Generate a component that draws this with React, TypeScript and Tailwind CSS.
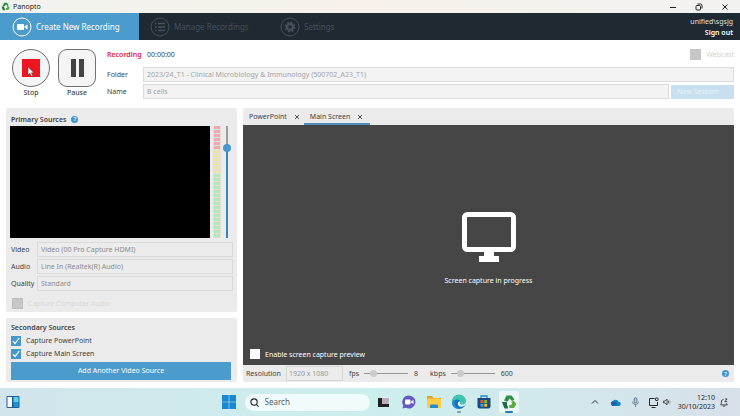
import { useState } from "react";
import type { ReactNode } from "react";

function LogoShape() {
  return (
    <>
      <path d="M3 6.500 5.500 1.500h5L13.500 5.500 11 7 8.500 4.500 6.500 8Z" fill="#2f9148" />
      <path d="M12.500 6.500 15.500 10l-2.500 4H8.500l-.5-3.500h3l-.5-2.500Z" fill="#5bad3c" />
      <path d="M1 8h4.500l1 3 .5 3.500H3.500Z" fill="#14703c" />
      <path d="m6.500 7 4.500 2.700-4.500 2.500Z" fill="white" />
    </>
  );
}

function HelpIcon() {
  return (
    <button type="button" aria-label="Help" className="flex size-[7px] items-center justify-center rounded-full bg-[#3f96cd] text-[6px] leading-none font-bold text-[#dcedf7]">
      ?
    </button>
  );
}

function NavTab({ label, active, className, children }: { label: string; active?: boolean; className: string; children: ReactNode }) {
  return (
    <button type="button" disabled={!active} className={`flex h-full items-center gap-1 text-[8px] ${active ? "bg-[#4b9bcd] text-white" : "text-[#46505a]"} ${className}`}>
      <svg viewBox="0 0 20 20" className="size-5" fill="none" stroke="currentColor" aria-hidden="true">
        <circle cx="10" cy="10" r="9" strokeWidth="1" />
        {children}
      </svg>
      {label}
    </button>
  );
}

const fieldStyle = "h-[15px] min-w-0 flex-1 appearance-none border border-[#dadada] px-[3px] text-[7px] leading-[13px] opacity-100";

function SourceRow({ id, label, value }: { id: string; label: string; value: string }) {
  return (
    <div className="flex items-center">
      <label htmlFor={id} className="w-[26px] text-[7px] leading-[15px]">{label}</label>
      <select id={id} disabled className={`${fieldStyle} bg-[#ececec] text-[#8b8b8b]`}>
        <option>{value}</option>
      </select>
    </div>
  );
}

function CheckRow({ label }: { label: string }) {
  const [checked, setChecked] = useState(true);
  return (
    <label className="flex h-[13px] items-center gap-[5px] text-[7px] leading-[13px]">
      <span className="grid size-[10px] place-items-center">
        <input type="checkbox" checked={checked} onChange={() => setChecked(!checked)} className="peer col-start-1 row-start-1 size-[10px] appearance-none bg-white checked:bg-[#4598cd]" />
        <svg viewBox="0 0 10 10" className="pointer-events-none col-start-1 row-start-1 hidden size-[10px] peer-checked:block" fill="none" stroke="white" strokeWidth="1.2" aria-hidden="true">
          <path d="m2 5.200 2 2.300L8.300 2" />
        </svg>
      </span>
      {label}
    </label>
  );
}

function RateSlider({ id, label, value, max, shown }: { id: string; label: string; value: number; max: number; shown: string }) {
  return (
    <div className="flex items-center">
      <label htmlFor={id} className="mr-[5px]">{label}</label>
      <input
        id={id}
        type="range"
        min={0}
        max={max}
        defaultValue={value}
        className="h-[7px] w-11 appearance-none bg-transparent bg-[linear-gradient(#969696,#969696)] bg-[length:100%_1px] bg-center bg-no-repeat [&::-webkit-slider-thumb]:size-[7px] [&::-webkit-slider-thumb]:appearance-none [&::-webkit-slider-thumb]:rounded-full [&::-webkit-slider-thumb]:bg-[#cbcbcb]"
      />
      <output htmlFor={id} className="ml-[6px]">{shown}</output>
    </div>
  );
}

function TitleBar() {
  return (
    <header className="flex h-[13px] items-center bg-linear-to-r from-[#f1f3ee] via-[#f7f1ea] to-[#f2f2f1] pl-px">
      <svg viewBox="0 0 16 16" className="size-[9px]" aria-hidden="true">
        <LogoShape />
      </svg>
      <h1 className="ml-[3px] flex-1 text-[7px] leading-[13px] text-[#222]">Panopto</h1>
      <div className="flex items-center gap-4 pr-[10px] text-[#222]">
        <button type="button" aria-label="Minimise">
          <svg viewBox="0 0 10 10" className="size-[10px]" stroke="currentColor" strokeWidth="1"><path d="M2 5.500h6" /></svg>
        </button>
        <button type="button" aria-label="Restore">
          <svg viewBox="0 0 10 10" className="size-[10px]" fill="none" stroke="currentColor" strokeWidth="1">
            <rect x="2" y="3.500" width="4.500" height="4.500" rx="1" />
            <path d="M3.500 2h3a1.500 1.500 0 0 1 1.500 1.500v3" />
          </svg>
        </button>
        <button type="button" aria-label="Close">
          <svg viewBox="0 0 10 10" className="size-[10px]" stroke="currentColor" strokeWidth="1"><path d="m2.500 2.500 5 5m0-5-5 5" /></svg>
        </button>
      </div>
    </header>
  );
}

function NavBar() {
  return (
    <nav className="flex h-[27px] items-center bg-[#1f2932]">
      <NavTab label="Create New Recording" active className="w-[139px] pl-3">
        <rect x="5" y="7" width="7" height="6" rx="1" fill="currentColor" stroke="none" />
        <path d="m12.500 9.500 3-2v5l-3-2Z" fill="currentColor" stroke="none" />
      </NavTab>
      <NavTab label="Manage Recordings" className="w-[130px] pl-[11px]">
        <path d="M8 6.500h7M8 10h7M8 13.500h7M5 6.500h1.500M5 10h1.500M5 13.500h1.500" strokeWidth="1.300" />
      </NavTab>
      <NavTab label="Settings" className="pl-[11px]">
        <circle cx="10" cy="10" r="3" strokeWidth="2.400" />
        <circle cx="10" cy="10" r="4.700" strokeWidth="1.500" strokeDasharray="1.850 1.850" />
      </NavTab>
      <div className="ml-auto flex flex-col items-end pr-[7px] text-[7px] leading-[11px] text-white">
        <span className="text-[#dfe3e6]">unified\sgsjg</span>
        <button type="button" className="font-semibold">Sign out</button>
      </div>
    </nav>
  );
}

function RecordingHeader() {
  return (
    <section className="flex pt-2 pr-[6px] pb-[9px] pl-[12px]" aria-label="Recording">
      <div className="flex gap-2 text-center text-[7px] leading-[10px] font-medium">
        <button type="button" className="w-[38px]">
          <span className="relative mb-px flex size-[38px] items-center justify-center rounded-full border border-[#707070] bg-[#f5f5f5]">
            <span className="size-[18px] bg-[#ef1521]" />
            <svg viewBox="0 0 8 11" className="absolute top-4 left-[14px] h-[11px] w-2" aria-hidden="true">
              <path d="M1 1v8l2-1.700 1.300 3 1.400-.6L4.400 6.800H7Z" fill="white" stroke="#444" strokeWidth=".5" />
            </svg>
          </span>
          Stop
        </button>
        <button type="button" className="w-[38px]">
          <span className="mb-px flex size-[38px] items-center justify-center gap-[3px] rounded-[9px] border border-[#707070] bg-[#f5f5f5]">
            <span className="h-[18px] w-[5px] bg-[#444]" />
            <span className="h-[18px] w-[5px] bg-[#444]" />
          </span>
          Pause
        </button>
      </div>
      <div className="ml-[11px] flex min-w-0 flex-1 flex-col text-[7px] leading-[13px]">
        <div className="flex h-[13px] items-center">
          <span className="w-10 font-semibold text-[#e51c3c]">Recording</span>
          <span>00:00:00</span>
          <label className="ml-auto flex items-center gap-[5px] text-[#d2d2d2]">
            <input type="checkbox" disabled className="size-[11px] appearance-none bg-[#c7c7c7]" />
            Webcast
          </label>
        </div>
        <div className="mt-[6px] flex items-center">
          <label htmlFor="folder" className="w-9 leading-[15px]">Folder</label>
          <select id="folder" disabled className={`${fieldStyle} bg-[#f3f3f3] text-[#a3a3a3]`}>
            <option>2023/24_T1 - Clinical Microbiology &amp; Immunology (500702_A23_T1)</option>
          </select>
        </div>
        <div className="mt-[2px] flex items-center">
          <label htmlFor="name" className="w-9 leading-[15px]">Name</label>
          <input id="name" disabled defaultValue="B cells" className={`${fieldStyle} bg-[#f3f3f3] text-[#a3a3a3]`} />
          <button type="button" disabled className="ml-[2px] h-[14px] w-[63px] bg-[#c7dfee] pl-[6px] text-left text-[#e8f2f8]">New Session</button>
        </div>
      </div>
    </section>
  );
}

const meterCells = Array.from({ length: 28 }, (_, i) => i);

function PrimarySources() {
  return (
    <section className="rounded-xs bg-[#ebebeb] pt-1 pr-1 pb-[2px] pl-[5px]">
      <div className="flex h-[14px] items-center gap-[5px]">
        <h2 className="text-[7px] leading-[13px] font-semibold">Primary Sources</h2>
        <HelpIcon />
      </div>
      <div className="flex h-[112px]">
        <div className="-ml-px flex-1 bg-black" />
        <div className="ml-[3px] flex w-2 flex-col gap-px bg-[#e2ded8] px-px" role="meter" aria-label="Audio level" aria-valuenow={0}>
          {meterCells.map((i) => (
            <span key={i} className={`h-[3px] ${i < 6 ? "bg-[#ecaab0]" : i < 12 ? "bg-[#e9e3ac]" : "bg-[#b3e6b9]"}`} />
          ))}
        </div>
        <input
          type="range"
          aria-label="Volume"
          defaultValue={83}
          className="mr-[2px] ml-[2px] h-full w-2 appearance-none bg-[linear-gradient(#9c9c9c_20%,#3486bb_20%)] bg-[length:2px_100%] bg-center bg-no-repeat [direction:rtl] [writing-mode:vertical-lr] [&::-webkit-slider-thumb]:size-2 [&::-webkit-slider-thumb]:appearance-none [&::-webkit-slider-thumb]:rounded-full [&::-webkit-slider-thumb]:bg-[#4598cd]"
        />
      </div>
      <div className="mt-1 flex flex-col gap-[2px]">
        <SourceRow id="video" label="Video" value="Video (00 Pro Capture HDMI)" />
        <SourceRow id="audio" label="Audio" value="Line In (Realtek(R) Audio)" />
        <SourceRow id="quality" label="Quality" value="Standard" />
      </div>
      <label className="mt-[6px] flex h-[13px] items-center gap-[5px] pl-px text-[7px] leading-[13px] text-[#d8d8d8]">
        <input type="checkbox" disabled className="size-[11px] appearance-none border border-[#bdbdbd] bg-[#c7c7c7]" />
        Capture Computer Audio
      </label>
    </section>
  );
}

function SecondarySources() {
  return (
    <section className="flex flex-1 flex-col rounded-xs bg-[#ebebeb] pt-[3px] pr-[6px] pb-[2px] pl-[5px]">
      <h2 className="text-[7px] leading-[13px] font-semibold">Secondary Sources</h2>
      <CheckRow label="Capture PowerPoint" />
      <CheckRow label="Capture Main Screen" />
      <button type="button" className="mt-[2px] h-[18px] bg-[#4b9bcd] text-[7px] leading-[18px] text-white">Add Another Video Source</button>
    </section>
  );
}

function ScreenTab({ label, active }: { label: string; active?: boolean }) {
  return (
    <div className={`flex h-full items-center border-b-2 pt-[2px] pl-[6px] leading-[15px] ${active ? "border-[#4b8fba] pr-[7px]" : "border-transparent pr-1"}`}>
      <button type="button" role="tab" aria-selected={!!active}>{label}</button>
      <button type="button" aria-label={`Close ${label}`} className="ml-[7px]">
        <svg viewBox="0 0 6 6" className="size-[6px]" stroke="currentColor" strokeWidth=".900"><path d="m1 1 4 4m0-4-4 4" /></svg>
      </button>
    </div>
  );
}

function CapturePanel() {
  return (
    <section className="flex min-w-0 flex-1 flex-col text-[7px] leading-[13px]">
      <div role="tablist" className="flex h-[17px] rounded-t-xs bg-[#ebebec]">
        <ScreenTab label="PowerPoint" />
        <ScreenTab label="Main Screen" active />
      </div>
      <div className="flex flex-1 flex-col bg-[#464646] text-white">
        <div className="flex flex-1 flex-col items-center justify-center gap-3 pt-[30px]">
          <svg viewBox="0 0 54 50" className="h-[50px] w-[54px]" aria-hidden="true">
            <rect x="2.500" y="2.500" width="49" height="35" rx="3" fill="none" stroke="white" strokeWidth="5" />
            <path d="M22 39h10v5h5v6H17v-6h5Z" fill="white" />
          </svg>
          <p>Screen capture in progress</p>
        </div>
        <label className="flex h-[22px] items-center gap-[5px] pl-[7px]">
          <input type="checkbox" className="size-[10px] appearance-none bg-white checked:bg-[#4598cd]" />
          Enable screen capture preview
        </label>
      </div>
      <div className="flex h-[17px] items-center bg-[#ebebeb] pr-[5px] pl-[3px] leading-[15px]">
        <label htmlFor="resolution" className="w-10">Resolution</label>
        <select id="resolution" disabled className="mr-[6px] h-[15px] w-[57px] appearance-none border border-[#d5d5d5] bg-[#ececec] px-[2px] leading-[13px] text-[#999] opacity-100">
          <option>1920 x 1080</option>
        </select>
        <div className="flex flex-1 gap-3">
          <RateSlider id="fps" label="fps" value={16} max={100} shown="8" />
          <RateSlider id="kbps" label="kbps" value={16} max={100} shown="600" />
        </div>
        <HelpIcon />
      </div>
    </section>
  );
}

function TaskbarIcon({ label, running, focused, children }: { label: string; running?: boolean; focused?: boolean; children: ReactNode }) {
  return (
    <button type="button" aria-label={label} className={`flex h-[22px] w-5 flex-col items-center justify-between rounded-xs pt-[3px] ${focused ? "bg-[#e9f7f7]" : ""}`}>
      <svg viewBox="0 0 16 16" className="size-4">{children}</svg>
      <span className={`h-[2px] rounded-full ${focused ? "w-2 bg-[#2679b8]" : running ? "w-1 bg-[#7f9ba3]" : ""}`} />
    </button>
  );
}

function Taskbar() {
  return (
    <footer className="flex h-7 items-center bg-linear-to-r from-[#d2e5ec] via-[#cbefed] to-[#d8e0ea] text-[#262626]">
      <div className="flex-1 px-[6px]">
        <button type="button" aria-label="Widgets" className="block">
          <svg viewBox="0 0 14 14" className="size-[14px]">
            <rect x=".5" y="1" width="13" height="12" rx="1" fill="#1d5f94" />
            <path d="M1.500 2H6v10H1.500Z" fill="white" />
            <path d="M7.500 2h5v5h-5Z" fill="#5bd2ed" />
            <path d="M7.500 7h5v5h-5Z" fill="#248fce" />
          </svg>
        </button>
      </div>
      <div className="flex items-center">
        <button type="button" aria-label="Start" className="mr-[9px]">
          <svg viewBox="0 0 14 14" className="size-[14px]" fill="#1789d1"><path d="M0 0h6.700v6.700H0ZM7.300 0H14v6.700H7.300ZM0 7.300h6.700V14H0ZM7.300 7.300H14V14H7.300Z" /></svg>
        </button>
        <label className="flex h-[17px] w-[125px] items-center gap-[6px] rounded-full bg-[#f0fbfb] pl-[5px]">
          <svg viewBox="0 0 10 10" className="size-[9px]" fill="none" stroke="#222" strokeWidth="1.200" aria-hidden="true">
            <circle cx="4.500" cy="4.500" r="3.500" />
            <path d="m7 7 2.500 2.500" />
          </svg>
          <input type="search" aria-label="Search" placeholder="Search" className="min-w-0 flex-1 bg-transparent text-[8px] placeholder:text-[#5a6262]" />
        </label>
        <div className="ml-1 flex gap-[5px]">
          <TaskbarIcon label="Task view">
            <path d="M6 3h8v8H6Z" fill="#eee9ee" />
            <path d="M2 4h4v6h7v3H2Z" fill="#222" />
            <path d="M6 4h7v6H6Z" fill="#b9afb8" />
          </TaskbarIcon>
          <TaskbarIcon label="Chat">
            <path d="M8 1.500a6.500 6.500 0 1 1-3 12.300L1.500 14.500l.8-3A6.500 6.500 0 0 1 8 1.500Z" fill="#6659bf" />
            <rect x="4" y="5.500" width="5.500" height="5" rx="1" fill="white" />
            <path d="m10 7.500 2.500-1.500v4L10 8.500Z" fill="white" />
          </TaskbarIcon>
          <TaskbarIcon label="File Explorer">
            <path d="M1 3.500V2h5l1.500 2H15v3H1Z" fill="#e0a021" />
            <rect x="1" y="4.500" width="14" height="9.500" rx="1" fill="#fbcc45" />
            <path d="M4 14v-2.500q0-1 1-1h6q1 0 1 1V14Z" fill="#238bd0" />
          </TaskbarIcon>
          <TaskbarIcon label="Edge" running>
            <circle cx="8" cy="8" r="7" fill="#1674bd" />
            <path d="M1 8a7 7 0 0 1 14-1q.5 3.500-4 3.500c-2 0-2-1-1.500-2C10 6.500 8 5 5.500 5.500 3 6 1.500 7 1 8Z" fill="#3fc4ae" />
            <path d="M9.500 8.500c-.5 1-.5 2 1.500 2q3.500 0 4-3 .5 3-2 4.500c-4 2-7-.5-6-3.500.5-1.500 2.500-1.500 2.500 0Z" fill="#dff3f5" />
            <path d="M5 6C3 8 3 12 7 14.500 3.500 15 1 12 1 8.500Q2 6.500 5 6Z" fill="#2192d0" />
          </TaskbarIcon>
          <TaskbarIcon label="Microsoft Store">
            <path d="M5 4V2h6v2" fill="none" stroke="#278bc5" strokeWidth="1.300" />
            <path d="M1.500 4h13v8.500q0 2-2 2h-9q-2 0-2-2Z" fill="#164b7c" />
            <path d="M4.500 6H7.500v3h-3Z" fill="#e75836" />
            <path d="M8.200 6h3v3h-3Z" fill="#83ba36" />
            <path d="M4.500 9.700h3v3h-3Z" fill="#34a6de" />
            <path d="M8.200 9.700h3v3h-3Z" fill="#f4ba29" />
          </TaskbarIcon>
          <TaskbarIcon label="Panopto" focused>
            <LogoShape />
          </TaskbarIcon>
        </div>
      </div>
      <div className="flex flex-1 items-center justify-end pr-3">
        <svg viewBox="0 0 8 8" className="mr-[11px] size-2" fill="none" stroke="currentColor" aria-hidden="true"><path d="m1 5.500 3-3 3 3" /></svg>
        <svg viewBox="0 0 12 8" className="mr-[11px] h-[7px] w-[11px]" aria-hidden="true">
          <path d="M3 8a2.800 2.800 0 0 1 0-5.500A3.800 3.800 0 0 1 9.500 3 2.500 2.500 0 0 1 9.500 8Z" fill="#1682ce" />
          <path d="m3 2.500 5.500 3L3.500 8H3a2.800 2.800 0 0 1 0-5.500Z" fill="#1264a6" />
        </svg>
        <svg viewBox="0 0 8 11" className="mr-[9px] h-[10px] w-[7px]" fill="none" stroke="#56708c" aria-hidden="true">
          <rect x="2.500" y=".5" width="3" height="6" rx="1.500" fill="#b5cddd" />
          <path d="M.700 5a3.300 3.300 0 0 0 6.600 0M4 8.300V11" />
        </svg>
        <svg viewBox="0 0 11 11" className="mr-1 size-[11px]" fill="none" stroke="currentColor" aria-hidden="true">
          <path d="M6.500 1.500h-5v7h8V5M3.500 10.500h4" />
          <rect x="7.500" y="1" width="2.500" height="2.500" rx=".5" />
        </svg>
        <svg viewBox="0 0 9 9" className="mr-[7px] size-2" fill="none" stroke="currentColor" strokeWidth=".9" aria-hidden="true">
          <path d="M.5 3.500h1.800L4.500 1.300v6.400L2.300 5.500H.5ZM6 3q1 1.500 0 3" />
          <path d="M7.300 1.800q2 2.700 0 5.400" stroke="#9ba9b3" />
        </svg>
        <div className="text-right text-[7px] leading-[9px]">
          <div>12:10</div>
          <div>30/10/2023</div>
        </div>
        <svg viewBox="0 0 9 10" className="ml-[5px] h-[9px] w-2" fill="none" stroke="currentColor" strokeWidth=".9" aria-hidden="true">
          <path d="M4 1.500q-2.500 0-2.500 3v2L.700 7.700h7.600L7.500 6.500v-1M3 9h3M5.500 1H8L5.500 4H8" />
        </svg>
      </div>
    </footer>
  );
}

export default function App() {
  return (
    <div className="flex min-h-screen flex-col bg-white font-['Noto_Sans',sans-serif] text-[#3f3f3f]">
      <TitleBar />
      <NavBar />
      <RecordingHeader />
      <main className="flex flex-1 gap-[6px] px-[6px] pb-[6px]">
        <aside className="flex w-[231px] flex-col gap-[6px]">
          <PrimarySources />
          <SecondarySources />
        </aside>
        <CapturePanel />
      </main>
      <Taskbar />
    </div>
  );
}
